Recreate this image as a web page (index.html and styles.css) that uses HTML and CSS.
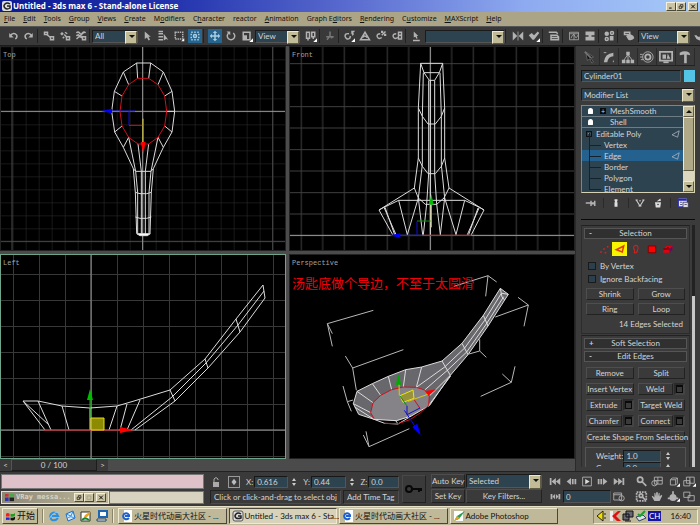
FILE: index.html
```html
<!DOCTYPE html>
<html lang="en">
<head>
    <meta charset="UTF-8">
    <meta name="viewport" content="width=device-width, initial-scale=1.0">
    <title>Untitled - 3ds max 6 - Stand-alone License</title>
    <link rel="stylesheet" href="styles.css">
</head>
<body>
    <header class="titlebar">
        <svg class="app-icon" viewBox="0 0 10 10"><rect width="10" height="10" rx="2" fill="#ddd"/><path d="M8 3Q5 1 3 3Q1 5 3 7Q5 9 8 7V5H5" fill="none" stroke="#222" stroke-width="1.5"/></svg>
        <h1>Untitled - 3ds max 6 - Stand-alone License</h1>
        <div class="win-buttons">
            <button class="win-btn" aria-label="Minimize"><svg viewBox="0 0 8 8"><path d="M1 6.500H5" stroke="#000" stroke-width="1.500"/></svg></button>
            <button class="win-btn" aria-label="Restore"><svg viewBox="0 0 8 8"><path d="M3 3V1H7V5H5M1 3.500H5V7H1Z" fill="none" stroke="#000"/></svg></button>
            <button class="win-btn close" aria-label="Close"><svg viewBox="0 0 8 8"><path d="M1 1L7 7M7 1L1 7" stroke="#000" stroke-width="1.500"/></svg></button>
        </div>
    </header>

    <nav class="menubar">
        <a href="#"><u>F</u>ile</a>
        <a href="#"><u>E</u>dit</a>
        <a href="#"><u>T</u>ools</a>
        <a href="#"><u>G</u>roup</a>
        <a href="#"><u>V</u>iews</a>
        <a href="#"><u>C</u>reate</a>
        <a href="#">M<u>o</u>difiers</a>
        <a href="#">C<u>h</u>aracter</a>
        <a href="#">reactor</a>
        <a href="#"><u>A</u>nimation</a>
        <a href="#">Graph E<u>d</u>itors</a>
        <a href="#"><u>R</u>endering</a>
        <a href="#">C<u>u</u>stomize</a>
        <a href="#"><u>M</u>AXScript</a>
        <a href="#"><u>H</u>elp</a>
    </nav>

    <div class="toolbar">
        <button class="tool" aria-label="Undo"><svg viewBox="0 0 16 16"><path d="M4 8Q9 2 13 7Q14 10 11 12" class="s2"/><path d="M3 4V10H9Z" class="f"/></svg></button>
        <button class="tool" aria-label="Redo"><svg viewBox="0 0 16 16"><path d="M12 8Q7 2 3 7Q2 10 5 12" class="s2"/><path d="M13 4V10H7Z" class="f"/></svg></button>
        <i class="sep"></i>
        <button class="tool" aria-label="Link"><svg viewBox="0 0 16 16"><path d="M2 3H6V6H2ZM10 9H14V13H10Z" class="s2"/><path d="M5 6L10 10" class="s2"/></svg></button>
        <button class="tool" aria-label="Unlink"><svg viewBox="0 0 16 16"><path d="M2 5H6M4 3V7M10 9H14V13H10ZM8 3L11 5M7 9L5 11" class="s2"/><path d="M7 6L10 9" class="s2"/></svg></button>
        <button class="tool" aria-label="Bind to Space Warp"><svg viewBox="0 0 16 16"><path d="M2 4Q4 1 6 4T10 4T14 4M2 8Q4 5 6 8T10 8M10 9H14V13H10ZM2 12L12 3M4 6L10 11" class="s2"/></svg></button>
        <i class="sep thin"></i>
        <span class="combo w-filter"><select aria-label="Selection filter"><option>All</option></select></span>
        <button class="tool gap1" aria-label="Select"><svg viewBox="0 0 16 16"><path d="M5 2V12L8 10L10 14L12 13L10 9H13Z" class="f"/></svg></button>
        <button class="tool" aria-label="Select by Name"><svg viewBox="0 0 16 16"><path d="M2 2H8M2 5H8M2 9H8M2 13H8" class="s2"/><path d="M9 5V14L12 12L15 13Z" class="f"/></svg></button>
        <button class="tool" aria-label="Selection Region"><svg viewBox="0 0 16 16"><path d="M3 3H13V12H3Z" class="s2" stroke-dasharray="2 1"/><path d="M15 11V15H11Z" fill="#fff"/></svg></button>
        <button class="tool" aria-label="Window Crossing"><svg class="lit" viewBox="0 0 16 16"><path d="M3 3H13V13H3Z" class="l" stroke-dasharray="2 2"/><circle cx="8" cy="8" r="2" class="l"/></svg></button>
        <i class="sep"></i>
        <button class="tool" aria-label="Move"><svg class="lit" viewBox="0 0 16 16"><path d="M8 4V12M4 8H12" class="l"/><path d="M8 1L11 4H5ZM8 15L11 12H5ZM1 8L4 5V11ZM15 8L12 5V11Z" fill="#a9cde4"/></svg></button>
        <button class="tool" aria-label="Rotate"><svg viewBox="0 0 16 16"><path d="M5 4A5 5 0 1 0 11 4" class="s2"/><path d="M2 2H7V7Z" class="f"/></svg></button>
        <button class="tool" aria-label="Scale"><svg viewBox="0 0 16 16"><path d="M3 3H12V13H3Z" class="s2"/><path d="M3 7H8V13H3Z" class="f"/><path d="M16 11V16H11Z" fill="#fff"/></svg></button>
        <span class="combo w-coord"><select aria-label="Reference coordinate system"><option>View</option></select></span>
        <button class="tool gap3" aria-label="Pivot"><svg viewBox="0 0 16 16"><path d="M2 3H6V11H2ZM9 3H13V9H9ZM4 12V14M11 8V12" class="s2"/><path d="M16 11V16H11Z" fill="#fff"/></svg></button>
        <i class="sep thin"></i>
        <button class="tool" aria-label="Manipulate"><svg viewBox="0 0 16 16"><path d="M8 2V8M3 9H13M8 8L4 13M8 8L11 11" class="dim"/></svg></button>
        <i class="sep thin"></i>
        <button class="tool" aria-label="Snap Toggle"><svg viewBox="0 0 16 16"><path d="M8 5Q2 4 3 9Q5 14 9 11L10 8M11 2H14L12 4Q15 5 12 7" class="s2"/><path d="M16 11V16H11Z" fill="#fff"/></svg></button>
        <button class="tool" aria-label="Angle Snap"><svg viewBox="0 0 16 16"><path d="M2 13H14L8 3ZM5 10Q7 6 11 10" class="s2"/></svg></button>
        <button class="tool" aria-label="Percent Snap"><svg viewBox="0 0 16 16"><path d="M7 5Q2 5 3 9Q5 13 9 10M9 7L14 2" class="s2"/><path d="M8 1H11V4H8ZM12 5H15V8H12Z" class="f"/></svg></button>
        <button class="tool" aria-label="Spinner Snap"><svg viewBox="0 0 16 16"><path d="M7 5Q2 5 3 9Q5 13 9 10M10 3H14V12H10ZM10 7H14" class="s2"/></svg></button>
        <i class="sep thin"></i>
        <button class="tool" aria-label="Edit Named Selections"><svg viewBox="0 0 16 16"><path d="M5 2V10L7 9L9 12L10 11L9 8H11ZM4 13H13V15H4Z" class="f"/></svg></button>
        <span class="combo w-named gap1"><select aria-label="Named selection sets"><option></option></select></span>
        <i class="sep wide"></i>
        <button class="tool" aria-label="Mirror"><svg viewBox="0 0 16 16"><path d="M1 2L7 8L1 14ZM15 2L9 8L15 14Z" class="f"/><path d="M8 2V14" class="s"/></svg></button>
        <button class="tool" aria-label="Align"><svg viewBox="0 0 16 16"><path d="M1 7L5 4L8 7L13 2L15 4L8 13H6Z" class="f"/><path d="M16 11V16H11Z" fill="#fff"/></svg></button>
        <i class="sep"></i>
        <button class="tool" aria-label="Layer Manager"><svg viewBox="0 0 16 16"><path d="M1 3H11L13 5M3 7H12L14 9V13H4V8M5 10H13" class="s2"/></svg></button>
        <i class="sep"></i>
        <button class="tool" aria-label="Curve Editor"><svg viewBox="0 0 16 16"><path d="M2 3H14V13H2ZM2 5H14M4 11Q7 3 9 8T13 7M8 5V13" class="s"/></svg></button>
        <button class="tool" aria-label="Schematic View"><svg viewBox="0 0 16 16"><path d="M2 2H14V7H10V9H14V14H2V9H6V7H2Z" class="f"/></svg></button>
        <i class="sep thin"></i>
        <button class="tool" aria-label="Material Editor"><svg viewBox="0 0 16 16"><circle cx="5" cy="5" r="3" class="f"/><circle cx="12" cy="4" r="2" class="s2"/><circle cx="5" cy="12" r="2" class="s2"/><path d="M9 8H14V14H9Z" class="f"/></svg></button>
        <i class="sep"></i>
        <button class="tool" aria-label="Render Scene"><svg viewBox="0 0 16 16"><path d="M2 3H9V6H2Z" class="s2"/><path d="M4 8Q9 3 14 8L15 11Q11 15 7 13Z" class="f"/></svg></button>
        <span class="combo w-render gap1"><select aria-label="Render type"><option>View</option></select></span>
        <button class="tool" aria-label="Quick Render"><svg viewBox="0 0 16 16"><path d="M3 7H6L8 9H14V12L10 14L6 12Z" class="f"/></svg></button>
    </div>

    <main class="workspace">
        <div class="stage">
            <div class="viewports">
                <section class="viewport">
                    <h2>Top</h2>
                    <svg viewBox="3 -3 852 609" preserveAspectRatio="xMidYMid slice">
                        <defs>
                            <pattern id="gridTop" x="-1" y="-5" width="39" height="39" patternUnits="userSpaceOnUse"><path d="M0 1H39M1 0V39" class="grid"/></pattern>
                        </defs>
                        <rect x="0" y="-3" width="860" height="612" fill="url(#gridTop)"/>
                        <path d="M36 -3V609M818 -3V609M0 580H860" class="major"/>
                        <path d="M428 -3V609M0 190H860" class="axis"/>
                        <g class="wire">
                            <path d="M400 362L370 298L344 252L335 190L343 130L370 72L410 45H452L490 72L516 130L524 190L516 252L490 298L460 362"/>
                            <path d="M410 45L413 91M452 45L446 91M490 72L474 110M516 130L494 144M524 190H500M516 252L494 234M490 298L474 268M370 72L386 110M343 130L366 144M335 190H360M344 252L366 234M370 298L386 268"/>
                            <path d="M400 362L407 370H453L460 362M400 362L406 433L410 556M460 362L454 433L450 556M386 268L407 370L413 433V556M474 268L453 370L447 433V556M414 288L424 370V560M446 288L436 370V560M406 433L420 437H440L454 433M406 507L420 511H440L454 507"/>
                            <path d="M410 557L420 563H442L451 557Z" fill="#fff"/>
                        </g>
                        <path d="M413 91H446L474 110L494 144L500 190L494 234L474 268L446 288H414L386 268L366 234L360 190L366 144L386 110Z" class="edge"/>
                        <path d="M330 189H405M387 190V232" class="blue"/>
                        <path d="M303 189L336 182V196Z" fill="#00f"/>
                        <path d="M387 232H428" class="edge"/>
                        <path d="M429 212V285" class="yellow"/>
                        <path d="M422 282H437L430 318Z" fill="#f00"/>
                    </svg>
                </section>
                <section class="viewport">
                    <h2>Front</h2>
                    <svg viewBox="6 -3 852 609" preserveAspectRatio="xMidYMid slice">
                        <defs>
                            <pattern id="gridFront" x="38" y="45" width="129" height="129" patternUnits="userSpaceOnUse"><path d="M0 2H129M0 66H129M2 0V129M66 0V129" class="grid2"/></pattern>
                        </defs>
                        <rect x="0" y="-3" width="860" height="612" fill="url(#gridFront)"/>
                        <path d="M427 -3V609M0 562H860" class="axis"/>
                        <g class="wire">
                            <path d="M398 46H464L470 180V330L483 420L588 486L550 560M398 46L391 180V330L379 420L273 486L314 560"/>
                            <path d="M398 46L408 74H454L464 46M408 74L424 97H440L454 74M406 74L403 205V350L391 450M456 74L460 205V350L470 450M422 97V377L416 468L406 560M440 97V377L446 468L457 560M427 97V560"/>
                            <path d="M391 180L403 205L420 228H442L460 205L470 180M391 330L403 355L420 377H442L460 355L470 330M379 420L391 450L412 469H446L468 450L483 420"/>
                            <path d="M332 457H530M332 457L288 478L273 486M530 457L574 478L588 486M288 478L324 560M291 478L320 560M574 478L538 560M570 480L542 560M332 457L358 560L391 450L404 560M530 457L504 560L470 450L457 560"/>
                        </g>
                        <path d="M405 562H550" class="edge"/>
                        <path d="M335 562H404M387 562V520" class="blue"/>
                        <path d="M305 562L337 556V569Z" fill="#00f"/>
                        <path d="M387 519H428" class="green"/>
                        <path d="M430 470V538" class="yellow"/>
                        <path d="M423 470H437L430 438Z" fill="#0b0"/>
                    </svg>
                </section>
                <section class="viewport active">
                    <h2>Left</h2>
                    <svg viewBox="1 255 284 203" preserveAspectRatio="xMidYMid slice">
                        <defs>
                            <pattern id="gridLeft" x="13" y="248" width="26" height="26" patternUnits="userSpaceOnUse"><path d="M0 .5H26M.5 0V26" stroke="#383838"/></pattern>
                        </defs>
                        <rect x="0" y="254" width="286" height="206" fill="url(#gridLeft)"/>
                        <path d="M91 254V460M0 430H286" class="axis fine"/>
                        <g class="wire fine">
                            <path d="M45 430L23 401H38L62 406L90 408L117 406L134 401L170 390L205 359L236 319L263 285L265 298L240 332L208 368L175 401L135 430"/>
                            <path d="M38 401L51 430M62 406L69 430M90 408V430M117 406L109 430M127 404L120 430M140 400L127 430M23 401L49 425M264 291L238 325L206 363L172 397L131 430M170 390L175 401M205 359L208 368M236 319L240 332"/>
                        </g>
                        <path d="M44 430H128" class="edge fine"/>
                        <path d="M120 427L134 430L120 433Z" fill="#f00"/>
                        <path d="M91 418H104V430H91Z" fill="#8c8a00" stroke="#e8e000"/>
                        <path d="M90 398V418" stroke="#0b0"/>
                        <path d="M87 400H93L90 389Z" fill="#0b0"/>
                    </svg>
                </section>
                <section class="viewport">
                    <h2>Perspective</h2>
                    <p class="note" lang="zh">汤匙底做个导边，不至于太圆滑</p>
                    <svg viewBox="6 9 852 609" preserveAspectRatio="xMidYMid slice">
                        <path d="M256 175L118 215L133 283M118 215L133 245M498 103L600 71L626 90M600 71L593 133M690 136L721 159L708 223M721 159L622 195M346 293L194 348L172 312M194 348L205 415M575 262V297L595 316M575 297L543 306M681 343L670 391L643 366M670 391L578 433M165 402L178 449L190 478M178 449L195 444M226 549L243 584L234 538M243 584L364 530" class="bracket"/>
                        <path d="M637 109L661 127L650 144L600 222L540 308L487 370L425 460L370 492L325 508L258 502L212 487L196 455L207 418L253 395L301 373L353 353L401 345L462 327L522 274L586 190Z" fill="#68676c"/>
                        <path d="M248 482L255 452L278 430L311 413L346 405L385 406L410 414L424 432L422 460L370 492L325 506L258 501Z" fill="#858387"/>
                        <g class="wire">
                            <path d="M637 109L661 127L650 144L600 222L540 308L487 370L425 460L370 492L325 506L258 502L212 487L196 455L207 418L253 395L301 373L353 353L401 345L462 327L522 274L586 190Z"/>
                            <path d="M207 418L255 452M253 395L278 430M301 373L311 413M353 353L346 405M401 345L385 406M196 455L248 482M200 465L258 502M385 406L470 345L530 288L590 205L640 124M410 414L478 355L536 300L595 216L647 134M424 432L487 370M462 327L487 370M522 274L540 308M586 190L600 222M637 109L642 135L650 144M642 124L661 127M422 460L488 372M258 502L290 514L330 516L322 504M370 492L330 516"/>
                        </g>
                        <path d="M258 500L248 482L255 452L278 430L311 413L346 405L385 406L410 414L424 432L422 460L398 482L366 503L330 515L290 514" class="edge"/>
                        <path d="M375 438L396 469" class="edge"/>
                        <path d="M333 395L334 430" class="yellow"/>
                        <path d="M323 398H340L331 367Z" fill="#0a0"/>
                        <path d="M336 431L375 414L378 439L345 451Z" fill="#97923b" stroke="#eee600" stroke-width="3"/>
                        <path d="M360 448L425 425" class="yellow"/>
                        <path d="M413 417L444 412L421 431Z" fill="#f00"/>
                        <path d="M336 432L357 462" class="green"/>
                        <path d="M357 462V488L396 468M358 488L380 522M349 475L358 488" class="blue"/>
                        <path d="M373 525L388 515L398 550Z" fill="#00f"/>
                    </svg>
                </section>
            </div>
            <div class="timeline">
                <button aria-label="Previous frame">&lt;</button>
                <span class="thumb">0 / 100</span>
                <button aria-label="Next frame">&gt;</button>
            </div>
        </div>

        <aside class="panel">
            <div class="tabs">
                <button aria-label="Create"><svg viewBox="0 0 16 16"><path d="M3 2L12 8L9 9L12 14L10 15L8 10L5 12Z" class="dark"/><path d="M2 2L9 9" class="dim"/></svg></button>
                <button class="on" aria-label="Modify"><svg viewBox="0 0 16 16"><path d="M2 14Q3 4 13 3V7Q7 7 6 14Z" class="f"/><path d="M2 3H5M13 12V14" class="s"/></svg></button>
                <button aria-label="Hierarchy"><svg viewBox="0 0 16 16"><path d="M6 2H10V6H6ZM1 11H5V15H1ZM11 11H15V15H11ZM6 11H10V15H6Z" class="f"/><path d="M8 5L3 12M8 5L13 12M8 5V12" class="s"/></svg></button>
                <button aria-label="Motion"><svg viewBox="0 0 16 16"><circle cx="9" cy="8" r="6" class="s"/><circle cx="9" cy="8" r="3" class="s2"/><path d="M0 5H3M0 8H3M1 11H4" class="s"/></svg></button>
                <button aria-label="Display"><svg viewBox="0 0 16 16"><path d="M1 2H15V12H1Z" class="s2"/><path d="M4 5H8V10H4ZM10 4L13 10H9Z" class="f"/><path d="M5 14H11" class="s2"/></svg></button>
                <button aria-label="Utilities"><svg viewBox="0 0 16 16"><path d="M2 3Q8 0 13 3L14 6L10 5V15H7V5L2 6Z" class="f"/></svg></button>
            </div>

            <div class="name-row">
                <input type="text" class="field" value="Cylinder01" aria-label="Object name">
                <button class="swatch" aria-label="Object color"></button>
            </div>
            <span class="combo modifier"><select aria-label="Modifier List"><option>Modifier List</option></select></span>

            <div class="stack">
                <ul>
                    <li class="mod"><i class="bulb"></i><i class="plus">+</i>MeshSmooth</li>
                    <li class="mod"><i class="bulb"></i><i class="plus none"></i>Shell</li>
                    <li class="base"><i class="minus">-</i>Editable Poly<svg class="tri" viewBox="0 0 12 10"><path d="M1 6L10 1L8 9Z"/></svg></li>
                    <li class="sub">Vertex</li>
                    <li class="sub picked">Edge<svg class="tri" viewBox="0 0 12 10"><path d="M1 6L10 1L8 9Z"/></svg></li>
                    <li class="sub">Border</li>
                    <li class="sub">Polygon</li>
                    <li class="sub">Element</li>
                </ul>
                <div class="scroll"><button class="up" aria-label="Scroll up"></button><i></i><button class="down" aria-label="Scroll down"></button></div>
            </div>

            <div class="stack-tools">
                <button aria-label="Pin Stack"><svg viewBox="0 0 16 16"><path d="M1 8H8" class="s2"/><path d="M7 5H9V7H12V5H14V12H12V10H9V12H7Z" class="f"/></svg></button>
                <i></i>
                <button aria-label="Show End Result"><svg viewBox="0 0 16 16"><path d="M6 3H10V5L9 7H10V13H6V7H7L6 5Z" fill="#ddd"/></svg></button>
                <i></i>
                <button aria-label="Make Unique"><svg viewBox="0 0 16 16"><path d="M2 4H5M3 4L8 12L13 4M8 4V6M11 4H14M6 12H10" fill="none" stroke="#ccc" stroke-width="1.500"/></svg></button>
                <button aria-label="Remove Modifier"><svg viewBox="0 0 16 16"><path d="M4 7H12L11 14H5ZM6 6L11 2L12 5Z" fill="#ddd"/><circle cx="8" cy="10" r="1" fill="#333"/></svg></button>
                <i></i>
                <button aria-label="Configure Modifier Sets"><svg viewBox="0 0 16 16"><path d="M2 2H13V13H2Z" fill="#e8e8ff"/><path d="M2 2H13V5H2Z" fill="#22b"/><path d="M2 2V13H8" fill="none" stroke="#22b"/><path d="M8 7H15V14H8Z" fill="#ddd" stroke="#335"/><path d="M4 7H7M4 10H7M10 10H13" stroke="#335"/></svg></button>
            </div>

            <div class="rollouts">
                <div class="rollout-list">
                    <section class="rollout">
                        <h3><i>-</i>Selection</h3>
                        <div class="levels">
                            <button aria-label="Vertex"><svg viewBox="0 0 16 16"><path d="M3 11H5V13H3ZM7 7H9V9H7ZM9 12H11V14H9ZM12 4H14V6H12Z" fill="#d22"/></svg></button>
                            <button class="on" aria-label="Edge"><svg viewBox="0 0 16 16"><path d="M3 9L13 4L11 12Z" fill="none" stroke="#e33c00" stroke-width="2"/></svg></button>
                            <button aria-label="Border"><svg viewBox="0 0 16 16"><path d="M5 5Q7 2 10 4Q12 7 10 10Q9 14 6 13V9Q4 7 5 5Z" fill="none" stroke="#c22" stroke-width="1.500"/></svg></button>
                            <button aria-label="Polygon"><svg viewBox="0 0 16 16"><path d="M3 4H13V13H3Z" fill="#f00" stroke="#600"/></svg></button>
                            <button aria-label="Element"><svg viewBox="0 0 16 16"><path d="M2 8L6 4H14V9L10 13H2Z" fill="#e00014"/><path d="M10 8L14 4V9L10 13Z" fill="#5a1060"/><path d="M2 8H10M7 6H9" stroke="#400" stroke-width="1.500"/></svg></button>
                        </div>
                        <label class="check"><input type="checkbox">By Vertex</label>
                        <label class="check"><input type="checkbox">Ignore Backfacing</label>
                        <div class="pair">
                            <button class="btn">Shrink</button>
                            <button class="btn">Grow</button>
                            <button class="btn">Ring</button>
                            <button class="btn">Loop</button>
                        </div>
                        <p class="count">14 Edges Selected</p>
                    </section>
                    <section class="rollout closed">
                        <h3><i>+</i>Soft Selection</h3>
                    </section>
                    <section class="rollout edit">
                        <h3><i>-</i>Edit Edges</h3>
                        <div class="pair loose">
                            <button class="btn">Remove</button>
                            <button class="btn">Split</button>
                            <button class="btn">Insert Vertex</button>
                            <span class="split"><button class="btn">Weld</button><button class="box" aria-label="Weld settings"></button></span>
                            <span class="split"><button class="btn">Extrude</button><button class="box" aria-label="Extrude settings"></button></span>
                            <button class="btn">Target Weld</button>
                            <span class="split"><button class="btn">Chamfer</button><button class="box" aria-label="Chamfer settings"></button></span>
                            <span class="split"><button class="btn">Connect</button><button class="box" aria-label="Connect settings"></button></span>
                            <button class="btn full">Create Shape From Selection</button>
                        </div>
                        <div class="weights">
                            <label>Weight: <input type="text" class="field" value="1.0"><i class="spin"></i></label>
                            <label>Crease: <input type="text" class="field" value="0.0"><i class="spin"></i></label>
                        </div>
                    </section>
                </div>
                <div class="rail"></div>
            </div>
        </aside>
    </main>

    <footer class="status">
        <div class="listener">
            <input type="text" class="macro" aria-label="Macro recorder">
            <div class="listener-row">
                <div class="mini-window">
                    <svg class="flag" viewBox="0 0 12 10"><path d="M1 1H5V4H1Z" fill="#c33"/><path d="M6 1H11V4H6Z" fill="#4a4"/><path d="M1 5H5V9H1Z" fill="#33a"/><path d="M6 5H11V9H6Z" fill="#222"/></svg>
                    <b>VRay messa...</b>
                    <button class="win-btn" aria-label="Restore"><svg viewBox="0 0 8 8"><path d="M3 3V1H7V5H5M1 3.500H5V7H1Z" fill="none" stroke="#000"/></svg></button>
                    <button class="win-btn" aria-label="Maximize"><svg viewBox="0 0 8 8"><path d="M1 1.500H7V7H1Z" fill="none" stroke="#999177"/></svg></button>
                    <button class="win-btn close" aria-label="Close"><svg viewBox="0 0 8 8"><path d="M1 1L7 7M7 1L1 7" stroke="#000" stroke-width="1.500"/></svg></button>
                </div>
                <input type="text" class="script" aria-label="Listener">
            </div>
        </div>
        <div class="coords">
            <div class="coord-row">
                <button class="ico" aria-label="Lock"><svg viewBox="0 0 12 12"><path d="M3 6H9V11H3Z" fill="#aaa"/><path d="M4 6V3Q6 0 8 3V4" fill="none" stroke="#aaa"/></svg></button>
                <button class="ico framed" aria-label="Absolute mode"><svg viewBox="0 0 12 12"><path d="M6 2L9 6L6 10L3 6Z" fill="#bbb"/></svg></button>
                <label>X: <input type="text" class="field" value="0.616"><i class="spin"></i></label>
                <label>Y: <input type="text" class="field" value="0.44"><i class="spin"></i></label>
                <label class="last">Z: <input type="text" class="field" value="0.0"></label>
            </div>
            <div class="prompt-row">
                <p class="prompt">Click or click-and-drag to select obj</p>
                <p class="tag">Add Time Tag</p>
            </div>
        </div>
        <button class="key" aria-label="Set Keys"><svg viewBox="0 0 20 12"><circle cx="5" cy="6" r="3" fill="none" stroke="#080808" stroke-width="2"/><path d="M8 6H18M15 6V9M17 6V8" stroke="#080808" stroke-width="2"/></svg></button>
        <div class="keying">
            <button class="btn">Auto Key</button>
            <span class="combo"><select aria-label="Key selection"><option>Selected</option></select></span>
            <button class="btn">Set Key</button>
            <button class="btn">Key Filters...</button>
        </div>
        <div class="playback">
            <button aria-label="Go to Start"><svg viewBox="0 0 16 12"><path d="M3 2V10" class="s2"/><path d="M9 2V10L4 6ZM14 2V10L9 6Z" class="f"/></svg></button>
            <button aria-label="Previous"><svg viewBox="0 0 16 12"><path d="M8 2V10L3 6Z" class="f"/><path d="M10 3V9M13 3V9" class="s2"/></svg></button>
            <button aria-label="Play"><svg viewBox="0 0 16 12"><path d="M3 1H13V11H3Z" class="s"/><path d="M6 3L11 6L6 9Z" fill="#ddd"/></svg></button>
            <button aria-label="Next"><svg viewBox="0 0 16 12"><path d="M8 2V10L13 6Z" class="f"/><path d="M3 3V9M6 3V9" class="s2"/></svg></button>
            <button aria-label="Go to End"><svg viewBox="0 0 16 12"><path d="M13 2V10" class="s2"/><path d="M2 2V10L7 6ZM7 2V10L12 6Z" class="f"/></svg></button>
            <button aria-label="Key Mode"><svg viewBox="0 0 16 12"><path d="M4 3V9M13 3V9" class="s2"/><path d="M8 3V9L5 6ZM9 3V9L12 6Z" class="f"/></svg></button>
            <input type="text" class="field" value="0" aria-label="Current frame">
            <button aria-label="Time Configuration"><svg viewBox="0 0 16 12"><path d="M2 2H11V10H2ZM2 4H11" class="s"/><circle cx="11" cy="8" r="3" class="s"/></svg></button>
        </div>
        <div class="nav-tools">
            <button aria-label="Zoom"><svg viewBox="0 0 16 12"><circle cx="7" cy="4" r="3" class="s2"/><path d="M9 6L14 11" class="s2"/></svg></button>
            <button aria-label="Zoom All"><svg viewBox="0 0 16 12"><path d="M5 1H14V9H5ZM9 1V9M5 5H14" class="s"/><circle cx="5" cy="8" r="3" class="s"/></svg></button>
            <button aria-label="Zoom Extents"><svg viewBox="0 0 16 12"><path d="M5 4H11V10H5ZM5 4L7 2H13L11 4M13 2V8L11 10" class="s"/><path d="M16 8V12H12Z" fill="#fff"/></svg></button>
            <button aria-label="Zoom Extents All"><svg viewBox="0 0 16 12"><path d="M5 1H14V8H5ZM9 1V8M2 5H9V11H2Z" class="s"/><path d="M16 8V12H12Z" fill="#fff"/></svg></button>
            <button aria-label="Region Zoom"><svg viewBox="0 0 16 12"><path d="M3 1H14V11H3Z" class="s2" stroke-dasharray="2 1"/><circle cx="8" cy="5" r="2" class="s2"/><path d="M10 7L13 10" class="s2"/></svg></button>
            <button aria-label="Pan"><svg viewBox="0 0 16 12"><path d="M5 11L2 6L3 5L5 7V2H6L7 6V1H9V6L10 2H11V6L13 4L14 5L11 11Z" class="f"/></svg></button>
            <button aria-label="Arc Rotate"><svg viewBox="0 0 16 12"><circle cx="8" cy="7" r="4" class="f"/><path d="M8 0V3M2 8H14" class="s2"/><path d="M16 8V12H12Z" fill="#fff"/></svg></button>
            <button aria-label="Min/Max Toggle"><svg viewBox="0 0 16 12"><path d="M2 1H9V7H2ZM7 5H14V11H7Z" class="s"/></svg></button>
        </div>
    </footer>

    <div class="taskbar">
        <button class="start"><svg class="flag" viewBox="0 0 12 10"><path d="M1 2Q3 0 5 2V5H1Z" fill="#e22"/><path d="M6 2Q9 3 11 1V4Q9 6 6 5Z" fill="#292"/><path d="M1 6H5V9Q3 8 1 9Z" fill="#22d"/><path d="M6 6Q9 7 11 5V8Q9 10 6 9Z" fill="#111"/></svg>开始</button>
        <i class="bar"></i>
        <div class="quick">
            <button aria-label="Internet Explorer"><svg viewBox="0 0 12 12"><path d="M10 8Q8 11 4 10Q1 8 3 4Q6 1 9 4L10 6H4" fill="none" stroke="#2a8fe0" stroke-width="2"/><path d="M1 9Q5 2 11 2" fill="none" stroke="#8cc8f4"/></svg></button>
            <button aria-label="Outlook Express"><svg viewBox="0 0 12 12"><path d="M2 4L9 1L11 8L4 11Z" fill="#d8ecff" stroke="#1d6cc8"/><path d="M2 4L7 6L9 1M3 9Q6 5 10 8" fill="none" stroke="#2a8fe0"/></svg></button>
            <button aria-label="Editor"><svg viewBox="0 0 12 12"><path d="M1 2H10V11H1Z" fill="#fff" stroke="#333"/><path d="M3 9L5 5L11 1L9 5L5 9Z" fill="#e8a020"/><path d="M2 10Q5 7 9 10" fill="none" stroke="#183" stroke-width="2"/></svg></button>
            <button aria-label="Show Desktop"><svg viewBox="0 0 12 12"><path d="M3 1H11V7H3Z" fill="#fff" stroke="#1f66b0" stroke-width="2"/><path d="M1 9H10V11H1Z" fill="#fff" stroke="#1f4066"/></svg></button>
        </div>
        <i class="bar"></i>
        <div class="tasks">
            <button><svg viewBox="0 0 12 12"><path d="M3 0H11V12H3Z" fill="#fff"/><path d="M8 8Q6 10 4 9Q1 7 3 4Q6 2 8 5V6H4" fill="none" stroke="#1b5fd0" stroke-width="2"/></svg><span>火星时代动画大社区 - ...</span></button>
            <button class="current"><svg viewBox="0 0 12 12"><rect x="1" y="1" width="10" height="10" rx="2" fill="#ddd" stroke="#555"/><path d="M9 4Q6 2 4 4Q2 6 4 8Q6 9 9 8V6H6" fill="none" stroke="#222" stroke-width="1.500"/></svg><span>Untitled - 3ds max 6 - Sta...</span></button>
            <button><svg viewBox="0 0 12 12"><path d="M3 0H11V12H3Z" fill="#fff"/><path d="M8 8Q6 10 4 9Q1 7 3 4Q6 2 8 5V6H4" fill="none" stroke="#1b5fd0" stroke-width="2"/></svg><span>火星时代动画大社区 - ...</span></button>
            <button><svg viewBox="0 0 12 12"><path d="M1 1H10V11H1Z" fill="#fff"/><path d="M1 11L4 6L12 1L6 9Z" fill="#2a9a50"/><path d="M1 11L4 6L7 8Z" fill="#e8a020"/></svg><span>Adobe Photoshop</span></button>
        </div>
        <div class="tray">
            <svg viewBox="0 0 12 12"><path d="M1 6L7 1V11Z" fill="#f4e000" stroke="#222"/><path d="M9 3V5M9 7V9" stroke="#222"/></svg>
            <svg viewBox="0 0 12 12"><path d="M1 1H4V11H1Z" fill="#eee"/><path d="M3 6L9 1H12L7 6L12 11H8Z" fill="#e01010"/></svg>
            <svg viewBox="0 0 12 12"><path d="M4 1H11V7H4ZM1 4H7V10H1Z" fill="#667" stroke="#111"/><path d="M3 11H9" stroke="#111"/></svg>
            <svg viewBox="0 0 12 12"><path d="M1 7L8 5L11 8L4 11Z" fill="#dde" stroke="#345"/><path d="M3 4L5 6L10 1" fill="none" stroke="#1aa030" stroke-width="2"/></svg>
            <b class="lang">CH</b>
            <time>16:40</time>
        </div>
    </div>
</body>
</html>
```

FILE: styles.css
```css
* {
    box-sizing: border-box;
}
body {
    margin: 0;
    height: 100vh;
    display: flex;
    flex-direction: column;
    overflow: hidden;
    background: #3b3b3b;
    color: #d4d4d4;
    font-family: Lato, "Noto Sans CJK SC", sans-serif;
    font-size: 8px;
    line-height: 10px;
}
h1, h2, h3, p, ul {
    margin: 0;
    padding: 0;
    font-weight: normal;
    font-size: 8px;
}
ul {
    list-style: none;
}
i {
    font-style: normal;
}
svg {
    display: block;
}
button, input, select {
    font: inherit;
    color: inherit;
    margin: 0;
    padding: 0;
    border: 0;
    border-radius: 0;
    background: none;
    min-width: 0;
}
.f { fill: #b2b2b2; }
.s { fill: none; stroke: #b2b2b2; }
.s2 { fill: none; stroke: #b2b2b2; stroke-width: 2; }
.l { fill: none; stroke: #a9cde4; stroke-width: 2; }
.dim { fill: none; stroke: #777; stroke-width: 2; }
.dark { fill: #141414; stroke: #666; }

/* title bar and menus */
.titlebar {
    flex: none;
    display: flex;
    align-items: center;
    height: 12px;
    padding: 0 2px;
    background: linear-gradient(90deg, #0c1a94, #2334ae 25%, #5a6ccf 50%, #8eaaf0 75%, #a6caf8);
}
.titlebar h1 {
    flex: 1;
    color: #fff;
    font-family: "Noto Sans", sans-serif;
    font-weight: bold;
}
.app-icon {
    width: 10px;
    height: 10px;
    margin-right: 1px;
}
.win-buttons {
    display: flex;
}
.win-btn {
    width: 10px;
    height: 9px;
    padding: 1px;
    background: #cbc4a4;
    border: 1px solid;
    border-color: #f4f0dc #4c4838 #4c4838 #f4f0dc;
}
.win-btn svg {
    width: 6px;
    height: 5px;
    overflow: visible;
}
.win-btn.close {
    margin-left: 2px;
}
.menubar {
    flex: none;
    display: flex;
    align-items: center;
    gap: 8px;
    height: 14px;
    padding: 0 4px;
    background: #aca486;
    font-family: "Noto Sans", sans-serif;
    font-size: 7px;
}
.menubar a {
    color: #111;
    text-decoration: none;
    white-space: nowrap;
}

/* main toolbar */
.toolbar {
    flex: none;
    display: flex;
    align-items: center;
    height: 20px;
    padding-left: 5px;
    background: #393939;
    border-top: 1px solid #555;
    border-bottom: 1px solid #1c1c1c;
    overflow: hidden;
}
.tool {
    flex: none;
    width: 16px;
    padding: 2px;
}
.tool svg {
    width: 12px;
    height: 12px;
}
.lit {
    background: #27648e;
    outline: 1px solid #27648e;
}
.sep {
    flex: none;
    width: 4px;
    height: 14px;
    border-left: 1px solid #222;
}
.sep.thin {
    width: 3px;
}
.sep.wide {
    width: 5px;
}
.gap1 {
    margin-left: 1px;
}
.gap3 {
    margin-left: 3px;
}
.combo {
    position: relative;
    flex: none;
    display: block;
    height: 13px;
    background: #2e4350;
    border: 1px solid;
    border-color: #1b1b1b #555 #555 #1b1b1b;
}
.combo select {
    display: block;
    width: 100%;
    height: 11px;
    padding-left: 2px;
    appearance: none;
}
.combo::before {
    content: "";
    position: absolute;
    right: 0;
    top: 0;
    width: 10px;
    height: 11px;
    background: #c2bb97;
    border: 1px solid;
    border-color: #eee8cc #605b45 #605b45 #eee8cc;
    pointer-events: none;
}
.combo::after {
    content: "";
    position: absolute;
    right: 2px;
    top: 4px;
    border: 3px solid transparent;
    border-top-color: #111;
    border-bottom: 0;
    pointer-events: none;
}
.w-filter { width: 46px; }
.w-coord { width: 45px; }
.w-named { width: 80px; }
.w-render { width: 52px; }

/* viewports */
.workspace {
    flex: 1;
    display: flex;
    min-height: 0;
}
.stage {
    flex: 1;
    display: flex;
    flex-direction: column;
    min-width: 0;
    background: #4b4b4b;
}
.viewports {
    flex: 1;
    display: grid;
    grid-template-columns: minmax(0, 1fr) minmax(0, 1fr);
    grid-template-rows: minmax(0, 1fr) minmax(0, 1fr);
    gap: 3px;
    min-height: 0;
}
.viewport {
    position: relative;
    overflow: hidden;
    background: #000;
    border: 1px solid #222;
}
.viewport.active {
    border-color: #6fa58c;
}
.viewport svg {
    width: 100%;
    height: 100%;
}
.viewport h2 {
    position: absolute;
    left: 2px;
    top: 3px;
    color: #a4a4a4;
    font-family: "Liberation Mono", monospace;
    font-size: 7px;
}
.note {
    position: absolute;
    left: 2px;
    top: 19px;
    color: #f00008;
    font-family: "Noto Sans CJK SC", sans-serif;
    font-size: 13px;
    line-height: 18px;
    white-space: nowrap;
}
.grid { fill: none; stroke: #2b2b2b; stroke-width: 2; }
.grid2 { fill: none; stroke: #3e3e3e; stroke-width: 3; }
.major { fill: none; stroke: #4a4a4a; stroke-width: 3; }
.axis { fill: none; stroke: #9c9c9c; stroke-width: 3; }
.wire { fill: none; stroke: #dcdcdc; stroke-width: 3; }
.bracket { fill: none; stroke: #b8b8b8; stroke-width: 3; }
.edge { fill: none; stroke: #d0101c; stroke-width: 3; }
.blue { fill: none; stroke: #1010d0; stroke-width: 3; }
.green { fill: none; stroke: #0a900a; stroke-width: 3; }
.yellow { fill: none; stroke: #d8cc10; stroke-width: 3; }
.fine { stroke-width: 1; }

.timeline {
    flex: none;
    display: flex;
    align-items: center;
    height: 12px;
}
.timeline button {
    width: 11px;
    height: 12px;
    background: #3a3a3a;
}
.thumb {
    width: 86px;
    background: #323232;
    border: 1px solid;
    border-color: #555 #1c1c1c #1c1c1c #555;
    text-align: center;
}

/* command panel */
.panel {
    display: flex;
    flex-direction: column;
    width: 125px;
    padding: 2px 5px 4px 5px;
    background: #3b3b3b;
    border-left: 1px solid #2a2a2a;
}
.tabs {
    display: flex;
    height: 18px;
    border-bottom: 1px solid #222;
}
.tabs button {
    flex: 1;
    padding: 2px;
    border-right: 1px solid #2a2a2a;
}
.tabs svg {
    width: 14px;
    height: 14px;
}
.field {
    height: 12px;
    padding: 0 2px;
    background: #2e4350;
    border: 1px solid;
    border-color: #181818 #555 #555 #181818;
}
.name-row {
    display: flex;
    align-items: center;
    gap: 3px;
    margin-top: 4px;
}
.name-row .field {
    flex: 1;
}
.swatch {
    width: 11px;
    height: 12px;
    background: #54c4e4;
}
.modifier {
    margin-top: 6px;
}
.stack {
    flex: none;
    display: flex;
    height: 88px;
    margin-top: 4px;
    background: #2e4350;
    border: 1px solid;
    border-color: #8a8468 #d8d2b4 #d8d2b4 #8a8468;
    overflow: hidden;
}
.stack ul {
    flex: 1;
}
.stack li {
    display: flex;
    align-items: center;
    height: 11px;
    padding-right: 2px;
}
.stack .mod {
    padding-left: 6px;
    border-bottom: 1px solid #6f7c84;
}
.bulb {
    width: 5px;
    height: 6px;
    margin-right: 7px;
    background: #fff;
    border-radius: 3px 3px 1px 1px;
}
.plus, .minus {
    width: 6px;
    height: 6px;
    margin-right: 4px;
    background: #0c0c0c;
    font-size: 7px;
    line-height: 6px;
    text-align: center;
}
.plus.none {
    background: none;
}
.minus {
    margin: 0 4px;
    background: none;
    border: 1px solid #111;
    line-height: 3px;
}
.stack .sub {
    position: relative;
    padding-left: 22px;
}
.stack .sub::before {
    content: "";
    position: absolute;
    left: 7px;
    top: -6px;
    width: 11px;
    height: 12px;
    border: 1px solid #14222c;
    border-width: 0 0 1px 1px;
}
.stack .picked {
    background: #24618e;
}
.tri {
    width: 10px;
    height: 8px;
    margin-left: auto;
    fill: none;
    stroke: #a8b4bc;
}
.scroll {
    display: flex;
    flex-direction: column;
    width: 11px;
    background: #ddd8bd;
}
.scroll button {
    height: 11px;
    background: #c2bb97;
    border: 1px solid;
    border-color: #eee8cc #605b45 #605b45 #eee8cc;
}
.scroll button::after {
    content: "";
    display: block;
    width: 0;
    margin: 0 auto;
    border: 3px solid transparent;
}
.scroll .up::after {
    border-bottom-color: #111;
    border-top: 0;
}
.scroll .down::after {
    border-top-color: #111;
    border-bottom: 0;
}
.scroll i {
    height: 54px;
    margin-bottom: auto;
    background: #b0a987;
    border: 1px solid;
    border-color: #eee8cc #605b45 #605b45 #eee8cc;
}
.stack-tools {
    flex: none;
    display: flex;
    align-items: center;
    justify-content: space-between;
    height: 27px;
    padding: 0 6px 6px 4px;
    border-bottom: 1px solid #0a0a0a;
}
.stack-tools svg {
    width: 12px;
    height: 12px;
}
.stack-tools i {
    width: 1px;
    height: 10px;
    background: #2a2a2a;
}
.rollouts {
    flex: 1;
    display: flex;
    min-height: 0;
    margin-top: 5px;
}
.rollout-list {
    flex: 1;
    overflow: hidden;
}
.rail {
    width: 3px;
    margin-left: 2px;
    background: linear-gradient(#222 71px, #c8c8c8 71px);
}
.rollout {
    padding: 2px;
    border: 1px solid #2c2c2c;
    border-top-color: #222;
}
.rollout h3 {
    position: relative;
    height: 11px;
    background: #303030;
    border: 1px solid #555;
    text-align: center;
    line-height: 9px;
}
.rollout h3 i {
    position: absolute;
    left: 4px;
    font-weight: bold;
}
.rollout.closed {
    margin-top: 1px;
    padding-bottom: 0;
    border-bottom: 0;
}
.rollout.edit {
    border-top: 0;
}
.levels {
    display: flex;
    justify-content: center;
    gap: 1px;
    padding: 3px 0;
}
.levels button {
    width: 15px;
    height: 14px;
    padding: 1px 2px;
}
.levels svg {
    width: 12px;
    height: 12px;
}
.levels .on {
    background: #f8f400;
}
.check {
    display: flex;
    align-items: center;
    gap: 4px;
    height: 13px;
    padding-left: 4px;
}
.check input {
    width: 8px;
    height: 8px;
    appearance: none;
    background: #2a404e;
    border: 1px solid #1a1a1a;
}
.pair {
    display: grid;
    grid-template-columns: 1fr 1fr;
    gap: 3px 4px;
    padding: 3px 2px 2px;
}
.pair.loose {
    row-gap: 4px;
    padding-top: 5px;
}
.btn {
    height: 12px;
    background: #3a3a3a;
    border: 1px solid;
    border-color: #4e4e4e #222 #222 #4e4e4e;
    line-height: 10px;
    white-space: nowrap;
}
.full {
    grid-column: 1 / 3;
}
.split {
    display: flex;
    gap: 1px;
}
.split .btn {
    flex: 1;
}
.box {
    width: 11px;
    height: 12px;
    background: #3a3a3a;
    border: 2px solid #2a2a2a;
    border-right-color: #444;
    border-bottom-color: #444;
}
.box::after {
    content: "";
    display: block;
    width: 5px;
    height: 5px;
    margin: auto;
    border: 1px solid #0a0a0a;
    border-top-width: 2px;
}
.count {
    padding-right: 4px;
    text-align: right;
    line-height: 14px;
}
.weights {
    margin: 2px 1px 0;
    padding: 2px 14px 2px 10px;
    border: 1px solid #555;
}
.weights label {
    display: flex;
    align-items: center;
    justify-content: space-between;
    height: 12px;
}
.weights .field {
    width: 38px;
    margin-left: auto;
    margin-right: 4px;
}
.spin {
    display: block;
    width: 6px;
    height: 8px;
    flex: none;
}
.spin::before, .spin::after {
    content: "";
    display: block;
    width: 0;
    margin: 0 auto 2px;
    border: 2px solid transparent;
    border-bottom: 3px solid #ccc;
    border-top: 0;
}
.spin::after {
    border-bottom: 0;
    border-top: 3px solid #ccc;
}

/* status bar */
.status {
    flex: none;
    display: flex;
    align-items: stretch;
    height: 35px;
    padding: 2px 3px 2px 1px;
    background: #3a3a3a;
    border-top: 1px solid #222;
}
.listener {
    display: flex;
    flex-direction: column;
    gap: 2px;
    width: 203px;
}
.macro {
    height: 15px;
    background: #dfc2c9;
    border: 1px solid #777;
}
.listener-row {
    display: flex;
    height: 14px;
}
.script {
    flex: 1;
    background: #d8d2c0;
    border: 1px solid #777;
}
.mini-window {
    display: flex;
    align-items: center;
    width: 108px;
    padding: 0 2px;
    background: linear-gradient(90deg, #8c8878, #beb799);
    border: 1px solid #e8e2c8;
}
.mini-window b {
    flex: 1;
    color: #d8d4c4;
    font-family: "DejaVu Sans Mono", monospace;
    font-size: 7px;
    white-space: nowrap;
}
.flag {
    width: 11px;
    height: 9px;
    margin-right: 1px;
}
.coords {
    flex: 1;
    min-width: 0;
    margin-left: 6px;
}
.coord-row {
    display: flex;
    align-items: center;
    gap: 6px;
    height: 16px;
}
.coord-row label {
    flex: 4;
    display: flex;
    align-items: center;
    gap: 1px;
}
.coord-row .last {
    flex: 3;
}
.coord-row .field {
    flex: 1;
    width: 0;
}
.coord-row .spin {
    margin-left: 2px;
}
.ico {
    width: 12px;
    height: 12px;
    flex: none;
}
.framed {
    border: 1px solid #999;
}
.ico svg {
    width: 100%;
    height: 100%;
}
.prompt-row {
    display: flex;
    gap: 2px;
}
.prompt, .tag {
    height: 14px;
    padding: 0 3px;
    border: 1px solid;
    border-color: #222 #4c4c4c #4c4c4c #222;
    line-height: 13px;
    white-space: nowrap;
}
.prompt {
    flex: 1;
}
.tag {
    width: 66px;
}
.key {
    width: 24px;
    margin: 1px 5px 1px 3px;
    padding: 1px;
    border: 1px solid;
    border-color: #484848 #222 #222 #484848;
}
.key svg {
    width: 20px;
    height: 12px;
}
.keying {
    display: grid;
    grid-template-columns: 34px 76px;
    grid-auto-rows: 14px;
    gap: 1px 1px;
    margin-right: 5px;
}
.keying .combo, .keying .btn {
    height: 14px;
}
.keying select, .keying .combo::before {
    height: 12px;
}
.playback {
    display: grid;
    grid-template-columns: repeat(5, 16px);
    grid-auto-rows: 15px;
    align-items: center;
}
.playback svg, .nav-tools svg {
    width: 14px;
    height: 11px;
    margin: auto;
}
.playback .field {
    grid-column: 2 / 5;
    height: 13px;
}
.nav-tools {
    display: grid;
    grid-template-columns: repeat(4, 16px);
    grid-auto-rows: 15px;
    align-items: center;
    margin-left: 6px;
}

/* task bar */
.taskbar {
    flex: none;
    display: flex;
    align-items: center;
    height: 19px;
    padding: 0 2px;
    background: #bfb899;
    border-top: 1px solid #e6e0c6;
    color: #111;
    overflow: hidden;
}
.taskbar .start, .tasks button {
    display: flex;
    align-items: center;
    height: 16px;
    padding: 0 2px;
    background: #bfb899;
    border: 1px solid;
    border-color: #efe9d0 #4a4636 #4a4636 #efe9d0;
    white-space: nowrap;
}
.start {
    font-size: 9px;
}
.bar {
    width: 2px;
    height: 14px;
    margin: 0 4px;
    border-left: 1px solid #8a846a;
    border-right: 1px solid #efe9d0;
}
.quick {
    display: flex;
    gap: 4px;
}
.quick svg, .tasks svg, .tray svg {
    flex: none;
    width: 12px;
    height: 12px;
}
.tasks {
    flex: 1;
    display: flex;
    gap: 2px;
    padding-right: 35px;
}
.tasks button {
    flex: 1;
    gap: 1px;
}
.tasks .current {
    background: #d8d2ba;
    border-color: #4a4636 #efe9d0 #efe9d0 #4a4636;
}
.tray {
    display: flex;
    align-items: center;
    gap: 1px;
    height: 15px;
    padding: 0 6px 0 2px;
    border: 1px solid;
    border-color: #8a846a #efe9d0 #efe9d0 #8a846a;
}
.lang {
    padding: 0 1px;
    background: #1414a0;
    color: #fff;
    font-weight: normal;
}
.tray time {
    margin-left: 8px;
}
```
